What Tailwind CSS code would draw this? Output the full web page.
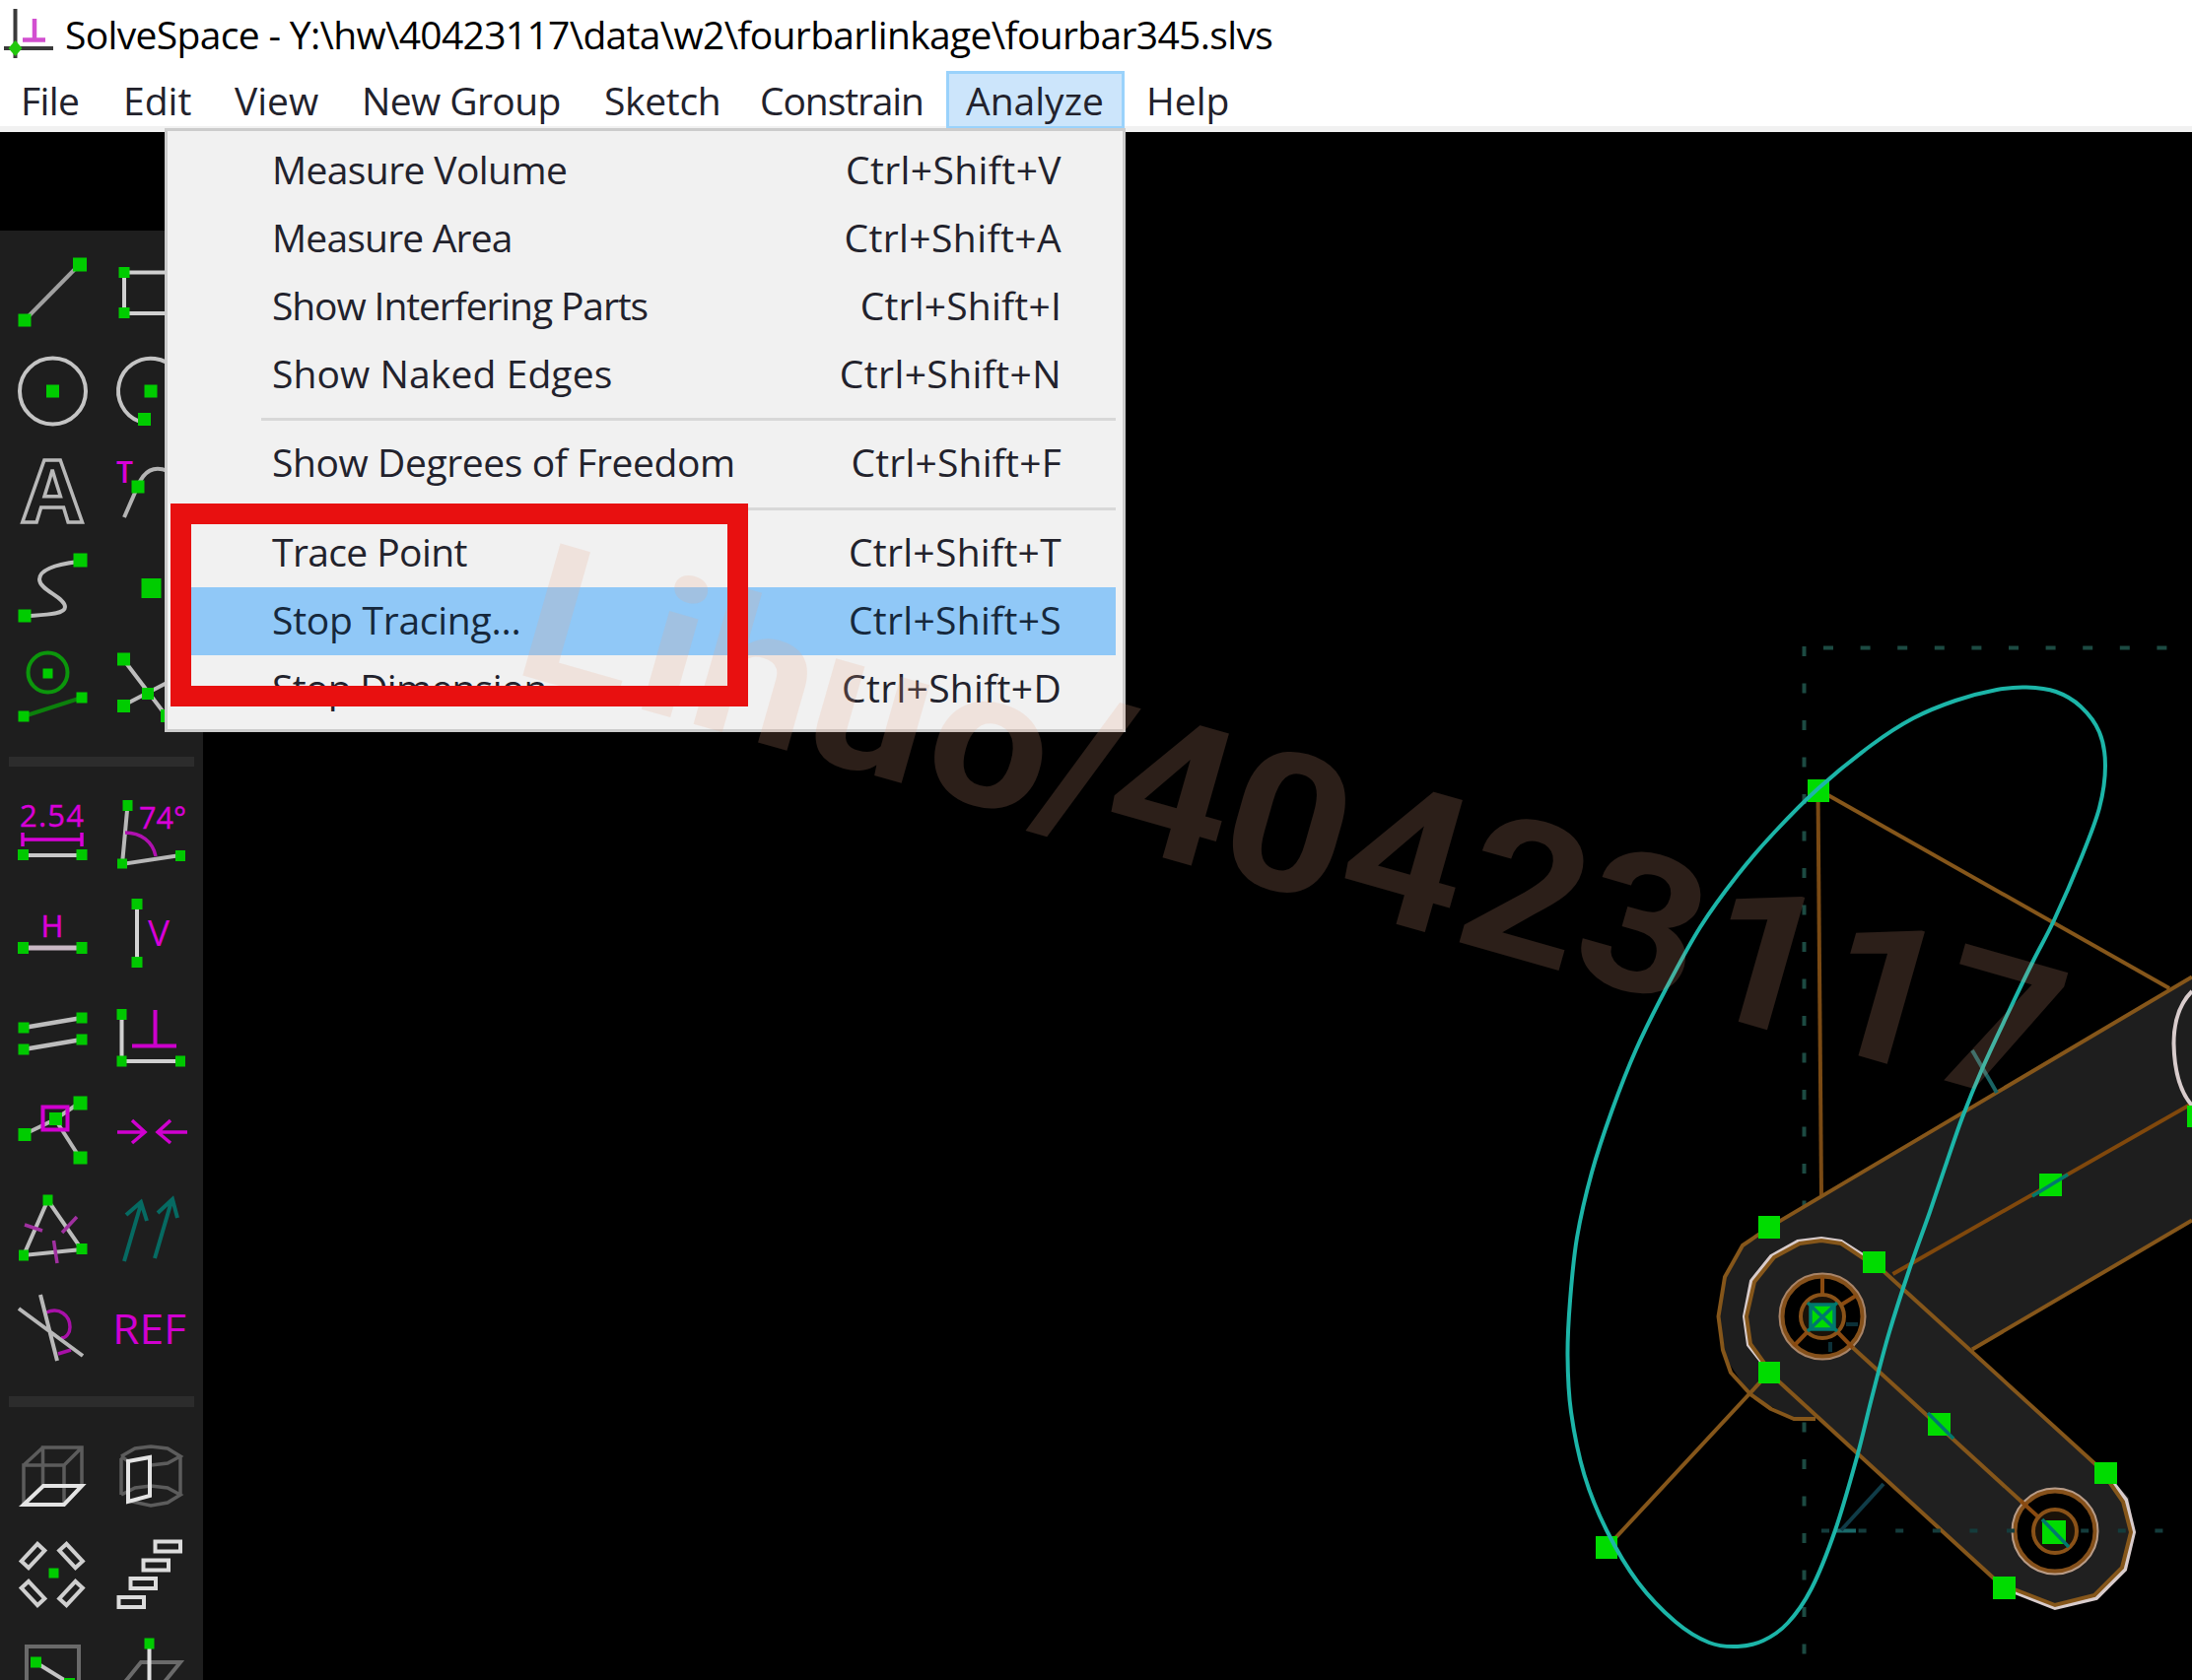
<!DOCTYPE html>
<html lang="en">
<head>
<meta charset="utf-8">
<title>SolveSpace</title>
<script src="https://cdn.jsdelivr.net/npm/@tailwindcss/browser@4"></script>
</head>
<body class="bg-black">
<div class="relative flex flex-col w-[2224px] h-[1705px] overflow-hidden bg-black font-['Open_Sans','Noto_Sans',sans-serif] text-[39px] text-[#22222c]">

  <!-- Title bar -->
  <header class="flex items-start h-[72px] shrink-0 bg-white">
    <svg class="w-[62px] h-[72px] shrink-0" viewBox="0 0 62 72" fill="none">
      <path d="M15.5 9V59M4 49H54" stroke="#3a3a3a" stroke-width="4"/>
      <path d="M35 19V40M23 40.500H46" stroke="#d24fd0" stroke-width="4.500"/>
      <path d="M15.500 41l7 8-7 8-7-8z" fill="#22c80c"/>
    </svg>
    <h1 class="pl-[4px] leading-[69px] tracking-[-0.66px] whitespace-nowrap text-black">SolveSpace - Y:\hw\40423117\data\w2\fourbarlinkage\fourbar345.slvs</h1>
  </header>

  <!-- Menu bar -->
  <nav class="flex h-[62px] shrink-0 bg-white border-b-[6px] border-[#f1f1f1] leading-[59px] whitespace-nowrap">
    <span class="w-[103px] pl-[21px] tracking-[-0.6px]">File</span>
    <span class="w-[115px] pl-[22px]">Edit</span>
    <span class="w-[126px] pl-5">View</span>
    <span class="w-[248px] pl-[23px] tracking-[-0.6px]">New Group</span>
    <span class="w-[159px] pl-[21px] tracking-[-0.3px]">Sketch</span>
    <span class="w-[209px] pl-5 tracking-[-1.1px]">Constrain</span>
    <span class="w-[181px] h-[59px] pl-[17px] bg-[#cce5fb] border-3 border-[#9ad2fb] leading-[53px]">Analyze</span>
    <span class="pl-[22px]">Help</span>
  </nav>

  <main class="flex-1 flex items-start bg-black">
    <!-- Toolbar -->
    <aside class="mt-[100px] w-[206px] h-[1471px] pt-[13px] pl-[3px] bg-[#1e1e1e] overflow-hidden">
      <div class="grid grid-cols-[100px_100px] auto-rows-[100px]">
        <svg viewBox="3 247 100 100" fill="none"><path d="M25 325L81 268" stroke="#a0a0a0" stroke-width="4"/><path d="M74 261.500h14v14h-14zM18.500 318.500h13v13h-13z" fill="#00cc00"/></svg>
        <svg viewBox="103 247 100 100" fill="none"><path d="M126 276.500H180V318H126z" stroke="#d0d0d0" stroke-width="4"/><path d="M120.500 271h11v11h-11zM120.500 312h11v11h-11z" fill="#00cc00"/></svg>
        <svg viewBox="3 347 100 100" fill="none"><circle cx="53.500" cy="397" r="33.500" stroke="#c4c4c4" stroke-width="4"/><path d="M47 390.500h13v13h-13z" fill="#00cc00"/></svg>
        <svg viewBox="103 347 100 100" fill="none"><path d="M141 427.500A33 33 0 1 1 186 397" stroke="#c4c4c4" stroke-width="4"/><path d="M146.500 390.500h13v13h-13zM140 419h13v13h-13z" fill="#00cc00"/></svg>
        <svg viewBox="3 447 100 100" fill="none"><text x="53" y="530" text-anchor="middle" class="font-['Open_Sans'] font-bold text-[88px]" stroke="#b8b8b8" stroke-width="3.500" fill="none">A</text></svg>
        <svg viewBox="103 447 100 100" fill="none"><path d="M126 525L140 493C146 478 156 472 170 478" stroke="#b4b4b4" stroke-width="4"/><text x="126.500" y="490" text-anchor="middle" class="font-['Open_Sans'] font-semibold text-[30px]" fill="#d800d8">T</text><path d="M133.500 487.500h13v13h-13z" fill="#00cc00"/></svg>
        <svg viewBox="3 547 100 100" fill="none"><path d="M80 570C54 573 40 579 40 588C40 599 66 606 66 616C66 624 44 624 28 625" stroke="#bdbdbd" stroke-width="4"/><path d="M74.500 561.500h14v14h-14zM18.500 618.500h13v13h-13z" fill="#00cc00"/></svg>
        <svg viewBox="103 547 100 100" fill="none"><path d="M143.500 587h20v20h-20z" fill="#00cc00"/></svg>
        <svg viewBox="3 647 100 100" fill="none"><circle cx="48.500" cy="682.500" r="20" stroke="#0c960c" stroke-width="4"/><path d="M24 727L83 708" stroke="#0c800c" stroke-width="4"/><path d="M43.500 678.500h10v10h-10zM18.500 721.500h11v11h-11zM77.500 702.500h11v11h-11z" fill="#00cc00"/></svg>
        <svg viewBox="103 647 100 100" fill="none"><path d="M125 669L169 727M125 716L175 690" stroke="#bdbdbd" stroke-width="4"/><path d="M119 662.500h13v13h-13zM119 710h13v13h-13zM144 698h12v12h-12zM163 720h13v13h-13z" fill="#00cc00"/></svg>
      </div>
      <div class="flex items-center h-[48px] pl-[6px]"><div class="w-[188px] h-[10px] mt-[3px] bg-[#2c2c2c]"></div></div>
      <div class="grid grid-cols-[100px_100px] auto-rows-[101px]">
        <svg viewBox="3 795 100 101" fill="none"><text x="20" y="839" textLength="65" class="font-['Open_Sans'] text-[31px]" fill="#d800d8" stroke="#d800d8" stroke-width="0.400">2.54</text><path d="M23 852H83M23 845V859M83 845V859" stroke="#d800d8" stroke-width="3.500"/><path d="M23 868H83" stroke="#c8c8c8" stroke-width="4"/><path d="M18 862h11v11h-11zM77.500 862h11v11h-11z" fill="#00c800"/></svg>
        <svg viewBox="103 795 100 101" fill="none"><path d="M129.500 817L124 877L183 868" stroke="#b8b8b8" stroke-width="4"/><path d="M127 845C143 845 155 854 158 869" stroke="#b010b0" stroke-width="3.500"/><text x="141" y="841" textLength="48" lengthAdjust="spacingAndGlyphs" class="font-['Open_Sans'] text-[31px]" fill="#d800d8" stroke="#d800d8" stroke-width="0.400">74°</text><path d="M124.500 812h10v11h-10zM119 871.500h10v10h-10zM178 863h10v11h-10z" fill="#00c800"/></svg>
        <svg viewBox="3 896 100 101" fill="none"><text x="53" y="950.500" text-anchor="middle" class="font-['Open_Sans'] text-[31px]" fill="#d800d8" stroke="#d800d8" stroke-width="0.600">H</text><path d="M23 962H83" stroke="#c8b8c4" stroke-width="5"/><path d="M18 956h11v12h-11zM77.500 956h11v12h-11z" fill="#00c800"/></svg>
        <svg viewBox="103 896 100 101" fill="none"><text x="161" y="960" text-anchor="middle" class="font-['Open_Sans'] text-[37px]" fill="#d800d8">V</text><path d="M139 917V977" stroke="#d4d4d4" stroke-width="4"/><path d="M133.500 912h11v11h-11zM133.500 971h11v11h-11z" fill="#00c800"/></svg>
        <svg viewBox="3 997 100 101" fill="none"><path d="M24 1043L83 1033M24 1065L83 1055" stroke="#bdbdbd" stroke-width="4.500"/><path d="M18.500 1037.500h11v11h-11zM77.500 1027.500h11v11h-11zM18.500 1059.500h11v11h-11zM77.500 1049.500h11v11h-11z" fill="#00c800"/></svg>
        <svg viewBox="103 997 100 101" fill="none"><path d="M123.500 1029V1077H183" stroke="#d0d0d0" stroke-width="4"/><path d="M134 1061.500H179M157.500 1025V1061" stroke="#cc00cc" stroke-width="4"/><path d="M118.500 1024h10v11h-10zM118.500 1071.500h10v11h-10zM178 1071.500h10v11h-10z" fill="#00c800"/></svg>
        <svg viewBox="3 1098 100 101" fill="none"><path d="M25 1151L56 1136L81 1119M56 1136L81 1175" stroke="#b8b8b8" stroke-width="4"/><path d="M43.500 1123.500h25v23h-25z" stroke="#d000d0" stroke-width="4"/><path d="M18.500 1145h13v13h-13zM74.500 1112.500h14v14h-14zM50 1129h13v13h-13zM74.500 1168.500h14v13h-14z" fill="#00cc00"/></svg>
        <svg viewBox="103 1098 100 101" fill="none"><path d="M119 1149H147M134 1137L147 1149L134 1160M190 1149H160M173 1137L160 1149L173 1160" stroke="#d000d0" stroke-width="3.500"/></svg>
        <svg viewBox="3 1199 100 101" fill="none"><path d="M48.500 1218L24 1274L83 1268z" stroke="#bdbdbd" stroke-width="4"/><path d="M25 1243L43 1249M63 1251L78 1235M54.500 1259L58 1282" stroke="#a030a0" stroke-width="3.500"/><path d="M43.500 1212.500h10v11h-10zM19 1268.500h10v11h-10zM77.500 1262h11v11h-11z" fill="#00cc00"/></svg>
        <svg viewBox="103 1199 100 101" fill="none"><path d="M126 1280L143 1222M128 1233L143 1220L149 1239M157 1277L174 1219M160 1231L175 1217L180 1236" stroke="#066a62" stroke-width="4"/></svg>
        <svg viewBox="3 1300 100 101" fill="none"><path d="M47 1332C60 1326 71 1335 71 1347C71 1353 67 1358 62 1358M59 1374L72 1370" stroke="#a810a8" stroke-width="3.500"/><path d="M19 1328L84 1376M41 1314L58 1381" stroke="#b8b8b8" stroke-width="4"/></svg>
        <svg viewBox="103 1300 100 101" fill="none"><text x="114" y="1363.500" textLength="75" lengthAdjust="spacingAndGlyphs" class="font-['Open_Sans'] text-[42px]" fill="#d000d0">REF</text></svg>
      </div>
      <div class="flex items-center h-[46px] pl-[6px]"><div class="w-[188px] h-[11px] -mt-[3px] bg-[#2c2c2c]"></div></div>
      <div class="grid grid-cols-[100px_100px] auto-rows-[100px]">
        <svg viewBox="3 1447 100 100" fill="none"><path d="M43.500 1508V1469H83V1508M24 1527V1487H65V1527M24 1487L43.500 1469M65 1487L83 1469" stroke="#5c5c5c" stroke-width="3.500"/><path d="M24 1527H65L83 1508H44z" stroke="#e4e4e4" stroke-width="4"/></svg>
        <svg viewBox="103 1447 100 100" fill="none"><path d="M123 1480V1517M183 1477V1517M123 1478L137 1470L153 1468L170 1470L183 1478L170 1485L153 1487M123 1517L137 1510L153 1508L170 1510L183 1517L170 1525L153 1528L130 1523M123 1478L130 1483" stroke="#5c5c5c" stroke-width="3.500"/><path d="M130 1483L152 1479V1518L130 1524z" stroke="#e4e4e4" stroke-width="4"/></svg>
        <svg viewBox="3 1547 100 100" fill="none"><g stroke="#cfcfcf" stroke-width="4"><rect x="21.500" y="1574" width="24" height="10" transform="rotate(-47 33.500 1579)"/><rect x="60" y="1574" width="24" height="10" transform="rotate(47 72 1579)"/><rect x="21.500" y="1612" width="24" height="10" transform="rotate(47 33.500 1617)"/><rect x="60" y="1612" width="24" height="10" transform="rotate(-47 72 1617)"/></g><path d="M49.500 1591.500h10v10h-10z" fill="#00cc00"/></svg>
        <svg viewBox="103 1547 100 100" fill="none"><path d="M157.500 1564.500h25.500v10h-25.500zM145.500 1583.500h25.500v10h-25.500zM132.500 1602h25.500v10h-25.500zM120.500 1621h25.500v10h-25.500z" stroke="#dcdcdc" stroke-width="4"/></svg>
        <svg viewBox="3 1647 100 100" fill="none"><path d="M27 1720V1671H80V1720" stroke="#6a6a6a" stroke-width="4"/><path d="M36 1687L70 1708" stroke="#c4c4c4" stroke-width="4"/><path d="M31 1681.500h11v11h-11zM65 1703h11v11h-11z" fill="#00cc00"/></svg>
        <svg viewBox="103 1647 100 100" fill="none"><path d="M126 1708L143 1687H183L166 1708" stroke="#6a6a6a" stroke-width="4"/><path d="M151.500 1668V1710" stroke="#e0e0e0" stroke-width="4"/><path d="M146.500 1662.500h10v11h-10z" fill="#00cc00"/></svg>
      </div>
    </aside>
  </main>

  <!-- Linkage drawing -->
  <svg class="absolute left-[1560px] top-[600px] w-[664px] h-[1105px]" viewBox="1560 600 664 1105" fill="none">
    <g stroke="#1c4a42" stroke-width="4">
      <path d="M1830.500 656V1685" stroke-dasharray="10 27.500"/>
      <path d="M1850 657.500H2200" stroke-dasharray="10 27.600"/>
    </g>
    <path d="M1795 1245.600L2224 991.400V1238.500L2001 1369.500L1842 1440L1820 1440L1775 1415L1752 1380L1743.500 1336L1750 1296L1768 1264z" fill="#1e1e1e"/>
    <path d="M1901 1281L2137 1496L2160 1520L2165 1555L2156 1595L2130 1622L2085 1632L2034 1612L1795 1393L1776 1365L1771 1336L1779 1295L1805 1266L1848 1258z" fill="#202020"/>
    <g stroke="#85561a" stroke-width="4" stroke-linejoin="round">
      <path d="M1844.500 802L1848 1213" stroke="#7a4a14"/>
      <path d="M1846 802L2201 1003"/>
      <path d="M1795 1245.600L2224 991.400M2001 1369.500L2224 1238.500"/>
      <path d="M1920.500 1293L2224 1120" stroke="#80480c"/>
      <path d="M1795 1245.600L1768 1264L1750 1296L1743.500 1336L1748 1370L1756 1393L1776 1415L1797 1430L1820 1440L1842 1440"/>
      <path d="M1630 1570.500L1795 1393M1901 1281L2137 1496M2034 1612L1795 1393"/>
      <path d="M1878 1366L2085 1555"/>
    </g>
    <g stroke="#d8cccc" stroke-width="4">
      <path d="M1901 1281L1868 1260L1848 1257L1824 1260L1797 1275L1777 1300L1770 1336L1774 1365L1796 1393"/>
      <path d="M2137 1496L2157 1522L2165 1555L2156 1593L2127 1622L2085 1632L2034 1612"/>
      <path d="M2224 1006C2210 1020 2205.500 1040 2205.500 1059C2206 1085 2212 1110 2226 1124"/>
    </g>
    <g stroke="#85561a" stroke-width="4">
      <path d="M1901 1284L1868 1262L1848 1259L1826 1262L1800 1276L1780 1301L1772 1336L1776 1364L1797 1393"/>
      <path d="M2136 1498L2154 1524L2162 1555L2153 1591L2125 1619L2085 1629L2036 1610"/>
    </g>
    <g stroke-width="4">
      <circle cx="1849" cy="1336" r="42.500" stroke="#a88468" fill="#000"/>
      <circle cx="1849" cy="1336" r="40.500" stroke="#85501a"/>
      <circle cx="2085" cy="1554" r="42.500" stroke="#b89c88" fill="#000"/>
      <circle cx="2085" cy="1554" r="40.500" stroke="#85501a"/>
      <path d="M1849 1336V1296M1849 1336L1883 1315M1849 1336L1820 1366M1849 1336L1880 1368M2050 1523L2085 1555" stroke="#8a4a10"/>
      <circle cx="1849" cy="1336" r="22" stroke="#8a5218" fill="#1a1208"/>
      <circle cx="2085" cy="1554" r="22" stroke="#8a5218" fill="#1a1208"/>
    </g>
    <g stroke="#1c5a5a" stroke-width="4">
      <path d="M1848 1553.500H2198" stroke-dasharray="8 29.600" stroke="#143c3c"/>
      <path d="M1862 1553.500H1883" stroke="#1a6a6a"/>
      <path d="M1868 1553L1911 1506" stroke="#103c48"/>
      <path d="M2001 1066L2026 1109" stroke="#1a6464"/>
      <path d="M1873 1344H1885M1857 1362V1372" stroke="#0c3038"/>
    </g>
    <g fill="#00dc00">
      <path d="M1834 791h22v23h-22zM1784 1234h22v23h-22zM1890 1270h23v22h-23zM1784 1382h22v22h-22zM1619 1559h22v23h-22zM1956 1434h23v23h-23zM2125 1484h23v22h-23zM2022 1600h23v23h-23zM2069 1191h23v23h-23zM2219 1122h22v22h-22zM2072 1543h24v24h-24zM1837 1324h24v25h-24z"/>
    </g>
    <path d="M2062 1214L2098 1192M1956 1434L1982 1460M2072 1542L2099 1570M1834 1322L1864 1351M1864 1322L1834 1351M1837 1324h24v25h-24z" stroke="#00786e" stroke-width="3.500"/>
    <path id="trace" stroke="#1cb5a8" stroke-width="4"/>
  </svg>

  <!-- Analyze menu -->
  <div class="absolute left-[167px] top-[130px] w-[975px] h-[613px] pt-[6px] bg-[#f1f1f1] border-3 border-[#cccccc] whitespace-nowrap">
    <ul class="ml-[7px] mr-[7px] [&>li]:flex [&>li]:justify-between [&>li]:h-[69px] [&>li]:leading-[66px] [&>li]:pl-[99px] [&>li]:pr-[55px]">
      <li><span class="tracking-[-0.6px]">Measure Volume</span><span class="tracking-[0.4px]">Ctrl+Shift+V</span></li>
      <li><span class="tracking-[-0.8px]">Measure Area</span><span class="tracking-[0.4px]">Ctrl+Shift+A</span></li>
      <li><span class="tracking-[-1.1px]">Show Interfering Parts</span><span class="tracking-[0.2px]">Ctrl+Shift+I</span></li>
      <li><span class="tracking-[0.1px]">Show Naked Edges</span><span class="tracking-[0.4px]">Ctrl+Shift+N</span></li>
    </ul>
    <div class="flex items-center h-[21px] pl-[95px] pr-[7px]"><div class="h-[3px] flex-1 bg-[#d8d8d8]"></div></div>
    <ul class="ml-[7px] mr-[7px] [&>li]:flex [&>li]:justify-between [&>li]:h-[69px] [&>li]:leading-[66px] [&>li]:pl-[99px] [&>li]:pr-[55px]">
      <li><span class="tracking-[-0.4px]">Show Degrees of Freedom</span><span class="tracking-[0.2px]">Ctrl+Shift+F</span></li>
    </ul>
    <div class="flex items-center h-[22px] pl-[95px] pr-[7px]"><div class="h-[3px] flex-1 bg-[#d8d8d8]"></div></div>
    <ul class="ml-[7px] mr-[7px] [&>li]:flex [&>li]:justify-between [&>li]:h-[69px] [&>li]:leading-[66px] [&>li]:pl-[99px] [&>li]:pr-[55px]">
      <li><span class="tracking-[-0.6px]">Trace Point</span><span class="tracking-[0.3px]">Ctrl+Shift+T</span></li>
      <li class="bg-[#90c8f7] text-[#16283c]"><span class="tracking-[-0.25px]">Stop Tracing...</span><span class="tracking-[0.3px]">Ctrl+Shift+S</span></li>
      <li><span class="tracking-[-0.7px]">Stop Dimension</span><span class="tracking-[0.3px]">Ctrl+Shift+D</span></li>
    </ul>
  </div>

  <!-- Watermark -->
  <svg class="absolute left-0 top-0 w-[2224px] h-[1705px]" viewBox="0 0 2224 1705">
    <text transform="translate(529 685) rotate(15.9) scale(1.1 1)" x="-11 103 155 265 379 488 551 662 775 890 1002 1118 1233 1343" y="0" class="font-['Roboto'] font-bold text-[196px]" fill="#eba585" fill-opacity="0.19">Lihuo/40423117</text>
  </svg>

  <!-- Callout frame -->
  <div class="absolute left-[173px] top-[511px] w-[586px] h-[206px] border-[21px] border-[#e81010]"></div>
</div>

<script>
  // Coupler curve through its sampled points, smoothed with Catmull-Rom segments.
  const pts = [[1845,800],[1899,756],[1941,729],[1984,711],[2026,700],[2056,697.500],[2086,702],[2111,717],[2130,743],[2136,777],[2130,820],[2111,872],[2084,934],[2062,977],[2036,1031],[2011,1085],[1991,1134],[1975,1180],[1958,1230],[1937,1289],[1916,1355],[1899,1419],[1884,1479],[1862,1553],[1838,1612],[1814,1647],[1789,1665],[1763,1671],[1734,1667],[1700,1646],[1662,1606],[1630,1553],[1607.500,1497],[1594,1433],[1590.500,1376],[1593,1320],[1600,1256],[1615,1190],[1635.500,1127],[1660,1065],[1690,1004],[1725,941],[1763,888],[1800,845]];
  const n = pts.length;
  let d = `M${pts[0]}`;
  for (let i = 0; i < n; i++) {
    const [a, b, c, e] = [pts[(i + n - 1) % n], pts[i], pts[(i + 1) % n], pts[(i + 2) % n]];
    d += `C${b[0] + (c[0] - a[0]) / 6} ${b[1] + (c[1] - a[1]) / 6} ${c[0] - (e[0] - b[0]) / 6} ${c[1] - (e[1] - b[1]) / 6} ${c[0]} ${c[1]}`;
  }
  document.getElementById('trace').setAttribute('d', d + 'Z');
</script>
</body>
</html>
